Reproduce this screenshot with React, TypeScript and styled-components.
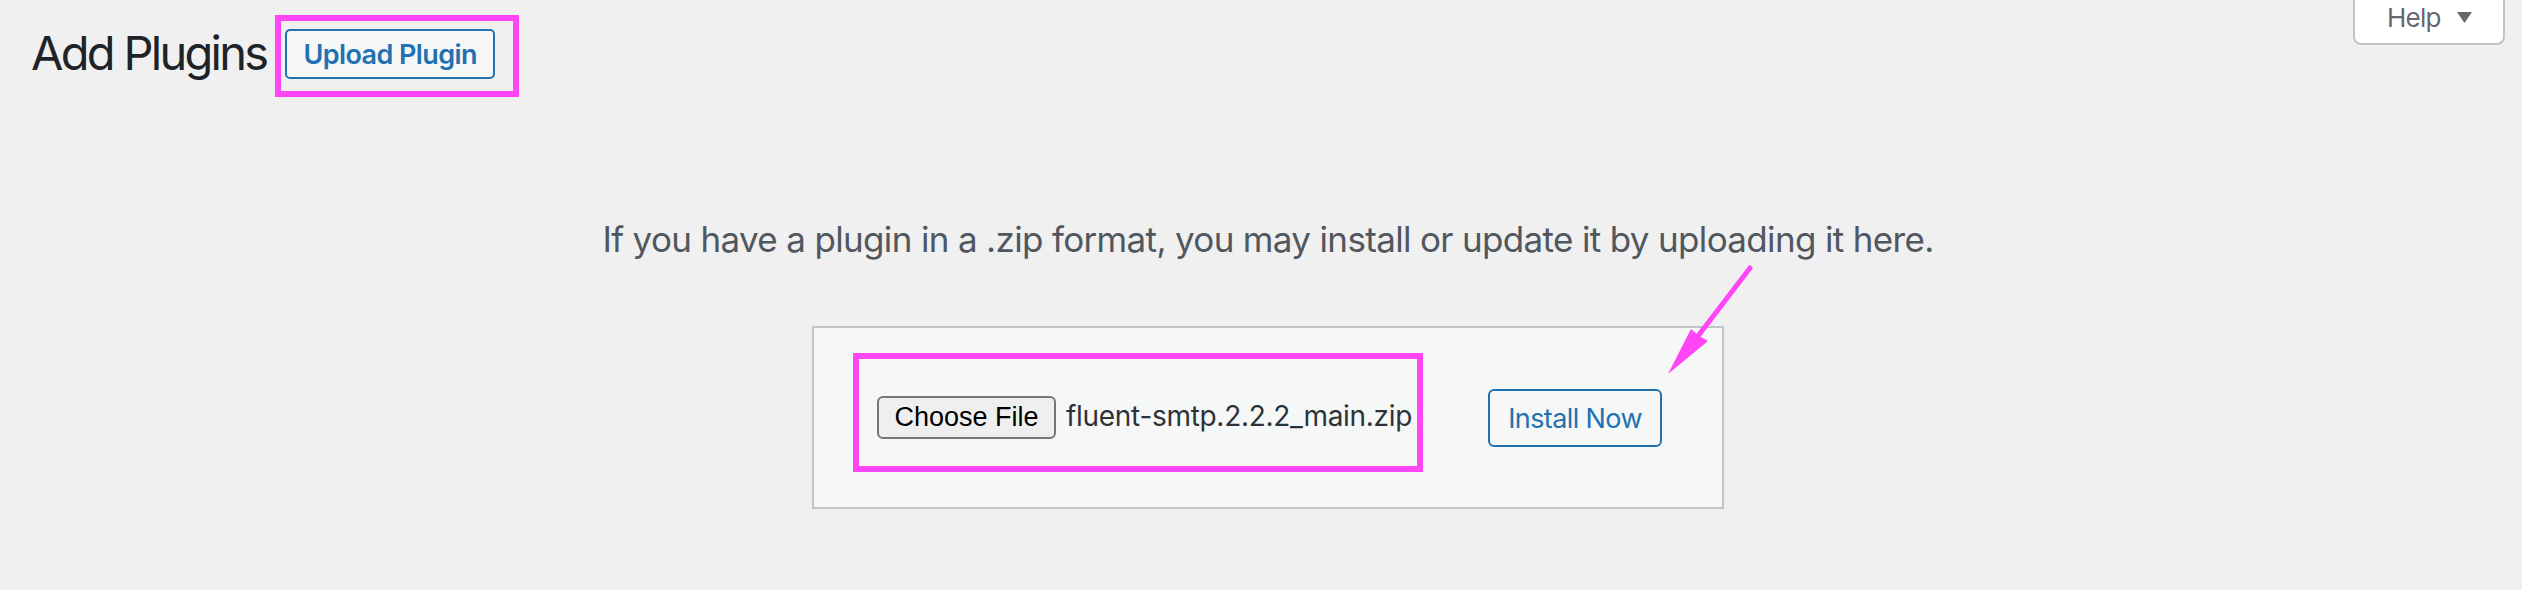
import styled, { createGlobalStyle } from 'styled-components';

const GlobalStyle = createGlobalStyle`
  html, body {
    margin: 0;
    padding: 0;
    background: #f0f0f1;
  }
  body {
    font-family: Inter, 'Noto Sans', 'DejaVu Sans', sans-serif;
    color: #1d2327;
  }
`;

const Page = styled.div`
  min-height: 590px;
  padding: 0 17px 0 31px;
  box-sizing: border-box;
`;

const Header = styled.div`
  display: flex;
  justify-content: space-between;
  align-items: flex-start;
`;

const TitleGroup = styled.div`
  display: flex;
  align-items: flex-start;
`;

const Title = styled.h1`
  margin: 29px 0 0;
  font-size: 47px;
  line-height: 48px;
  font-weight: 400;
  letter-spacing: -2.7px;
  color: #1d2327;
`;

// magenta annotation frame drawn around the parts being pointed out
const Highlight = styled.div<{ $pad: string }>`
  display: flex;
  align-items: baseline;
  border: 6px solid #ff45f5;
  padding: ${(p) => p.$pad};
`;

const TitleHighlight = styled(Highlight)`
  margin: 15px 0 0 9px;
`;

const UploadButton = styled.button`
  height: 50px;
  padding: 0 16px;
  border: 2px solid #2271b1;
  border-radius: 5px;
  background: #f6f7f7;
  color: #2271b1;
  font-family: Inter, sans-serif;
  font-size: 27px;
  font-weight: 600;
  letter-spacing: -0.6px;
  cursor: pointer;
`;

const HelpTab = styled.button`
  display: flex;
  align-items: flex-start;
  gap: 16px;
  width: 152px;
  height: 47px;
  margin-top: -2px;
  padding: 5px 0 0 32px;
  box-sizing: border-box;
  border: 2px solid #c3c4c7;
  border-radius: 0 0 8px 8px;
  background: #fff;
  color: #646970;
  font-family: Inter, sans-serif;
  font-size: 26px;
  line-height: 26px;
  letter-spacing: -0.8px;
  cursor: pointer;
`;

const Caret = styled.svg`
  width: 15px;
  height: 11px;
  margin-top: 7px;
  fill: #646970;
`;

const UploadSection = styled.div`
  display: flex;
  flex-direction: column;
  align-items: center;
`;

const InstallHelp = styled.p`
  margin: 118px 0 0;
  font-size: 35px;
  line-height: 48px;
  letter-spacing: -0.66px;
  color: #50575e;
`;

const UploadForm = styled.form`
  position: relative;
  display: flex;
  align-items: flex-start;
  width: 912px;
  height: 183px;
  margin-top: 63px;
  padding: 25px 0 0 39px;
  box-sizing: border-box;
  border: 2px solid #c3c4c7;
  background: #f6f7f7;
`;

const ChooseButton = styled.span`
  display: inline-flex;
  align-items: center;
  justify-content: center;
  width: 179px;
  height: 43px;
  box-sizing: border-box;
  border: 2px solid #767676;
  border-radius: 6px;
  background: #efefef;
  color: #000;
  font-family: 'Liberation Sans', Arial, sans-serif;
  font-size: 27px;
`;

const FileName = styled.span`
  margin-left: 10px;
  font-size: 28px;
  letter-spacing: -0.3px;
  color: #2c3338;
`;

const InstallButton = styled.button`
  width: 174px;
  height: 58px;
  margin: 36px 0 0 65px;
  border: 2px solid #2271b1;
  border-radius: 6px;
  background: #f6f7f7;
  color: #2271b1;
  font-family: Inter, sans-serif;
  font-size: 27px;
  letter-spacing: -0.6px;
  cursor: pointer;
`;

const Arrow = styled.svg`
  position: absolute;
  left: 838px;
  top: -71px;
  width: 110px;
  height: 125px;
  overflow: visible;
`;

export default function App() {
  return (
    <>
      <GlobalStyle />
      <Page>
        <Header>
          <TitleGroup>
            <Title>Add Plugins</Title>
            <TitleHighlight $pad="8px 18px 12px 4px">
              <UploadButton type="button">Upload Plugin</UploadButton>
            </TitleHighlight>
          </TitleGroup>
          <HelpTab type="button">
            Help
            <Caret viewBox="0 0 15 11">
              <polygon points="0,0 15,0 7.5,11" />
            </Caret>
          </HelpTab>
        </Header>

        <UploadSection>
          <InstallHelp>
            If you have a plugin in a .zip format, you may install or update it by uploading it here.
          </InstallHelp>
          <UploadForm onSubmit={(e) => e.preventDefault()}>
            <Highlight $pad="37px 5px 27px 18px">
              <ChooseButton>Choose File</ChooseButton>
              <FileName>fluent-smtp.2.2.2_main.zip</FileName>
            </Highlight>
            <InstallButton type="submit">Install Now</InstallButton>
            <Arrow viewBox="0 0 110 125">
              <line x1="98" y1="11" x2="46" y2="79" stroke="#ff45f5" strokeWidth="5" strokeLinecap="round" />
              <polygon points="16,117 39,72 47,79 56,84" fill="#ff45f5" />
            </Arrow>
          </UploadForm>
        </UploadSection>
      </Page>
    </>
  );
}
